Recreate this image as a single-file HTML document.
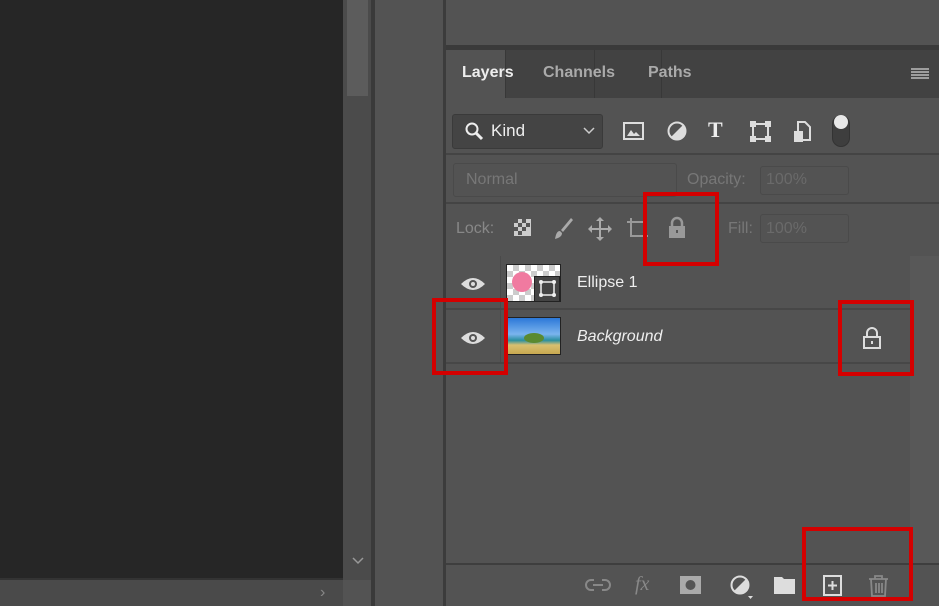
<!DOCTYPE html><html><head><style>
*{margin:0;padding:0;box-sizing:border-box}
body{width:939px;height:606px;overflow:hidden;background:#535353;position:relative;font-family:"Liberation Sans",sans-serif;color:#ddd}
.a{position:absolute}
.rb{position:absolute;border:4px solid #d40000}
svg{position:absolute}
</style></head><body>
<div class="a" style="left:0;top:0;width:343px;height:578px;background:#262626"></div>
<div class="a" style="left:0;top:578px;width:343px;height:2px;background:#333"></div>
<div class="a" style="left:0;top:580px;width:343px;height:26px;background:#4a4a4a"></div>
<div class="a" style="left:320px;top:584px;color:#888;font-size:16px">›</div>
<div class="a" style="left:343px;top:0;width:28px;height:580px;background:#4b4b4b"></div>
<div class="a" style="left:347px;top:0;width:21px;height:96px;background:#5c5c5c"></div>
<svg style="left:350px;top:555px" width="16" height="12"><path d="M3 3l5 5 5-5" stroke="#999" fill="none" stroke-width="1.5"/></svg>
<div class="a" style="left:371px;top:0;width:4px;height:606px;background:#3a3a3a"></div>
<div class="a" style="left:375px;top:0;width:68px;height:606px;background:#535353"></div>
<div class="a" style="left:443px;top:0;width:3px;height:606px;background:#3c3c3c"></div>
<div class="a" style="left:446px;top:0;width:493px;height:45px;background:#535353"></div>
<div class="a" style="left:446px;top:45px;width:493px;height:5px;background:#3a3a3a"></div>
<div class="a" style="left:446px;top:50px;width:493px;height:48px;background:#424242"></div>
<div class="a" style="left:446px;top:50px;width:59px;height:49px;background:#535353"></div>
<div class="a" style="left:505px;top:50px;width:1px;height:48px;background:#383838"></div>
<div class="a" style="left:594px;top:50px;width:1px;height:48px;background:#383838"></div>
<div class="a" style="left:661px;top:50px;width:1px;height:48px;background:#383838"></div>
<div class="a" style="left:462px;top:64px;font-size:16px;font-weight:bold;color:#eee">Layers</div>
<div class="a" style="left:543px;top:64px;font-size:16px;font-weight:bold;color:#aaa">Channels</div>
<div class="a" style="left:648px;top:64px;font-size:16px;font-weight:bold;color:#aaa">Paths</div>
<svg style="left:910px;top:67px" width="20" height="14"><path d="M1 2h18M1 5h18M1 8h18M1 11h18" stroke="#bbb" stroke-width="1.5"/></svg>
<!-- filter row -->
<div class="a" style="left:452px;top:114px;width:151px;height:35px;background:#444;border:1px solid #3a3a3a;border-radius:3px"></div>
<svg style="left:464px;top:121px" width="22" height="22"><circle cx="8" cy="8" r="5.5" stroke="#eee" stroke-width="2" fill="none"/><path d="M12 12l6 6" stroke="#eee" stroke-width="3"/></svg>
<div class="a" style="left:491px;top:121px;font-size:17px;color:#eee">Kind</div>
<svg style="left:582px;top:126px" width="14" height="10"><path d="M2 2l5 5 5-5" stroke="#ccc" fill="none" stroke-width="1.5"/></svg>
<svg style="left:622px;top:120px" width="24" height="22"><rect x="2" y="3" width="19" height="16" stroke="#ddd" stroke-width="2" fill="none"/><path d="M5 16l4-6 3 4 2-2 4 4z" fill="#ddd"/></svg>
<svg style="left:665px;top:119px" width="24" height="24"><circle cx="12" cy="12" r="8.5" stroke="#ddd" stroke-width="2" fill="none"/><path d="M18 6L6 18A8.5 8.5 0 0 0 18 6z" fill="#ddd"/></svg>
<div class="a" style="left:708px;top:117px;font-size:22px;font-weight:bold;font-family:'Liberation Serif',serif;color:#eee">T</div>
<svg style="left:749px;top:120px" width="24" height="24"><rect x="4" y="4" width="15" height="15" stroke="#ddd" stroke-width="2" fill="none"/><rect x="1" y="1" width="6" height="6" fill="#ddd"/><rect x="16" y="1" width="6" height="6" fill="#ddd"/><rect x="1" y="16" width="6" height="6" fill="#ddd"/><rect x="16" y="16" width="6" height="6" fill="#ddd"/></svg>
<svg style="left:792px;top:119px" width="22" height="26"><path d="M6 3h7l5 5v13H6z" stroke="#ddd" stroke-width="2" fill="none"/><rect x="2" y="12" width="9" height="11" fill="#ddd"/></svg>
<div class="a" style="left:832px;top:115px;width:18px;height:32px;border-radius:9px;background:#3e3e3e;border:1px solid #333"></div>
<div class="a" style="left:834px;top:115px;width:14px;height:14px;border-radius:7px;background:#e8e8e8"></div>
<div class="a" style="left:446px;top:153px;width:493px;height:2px;background:#444"></div>
<!-- blend row -->
<div class="a" style="left:453px;top:163px;width:224px;height:34px;border:1px solid #4a4a4a;border-radius:3px"></div>
<div class="a" style="left:466px;top:171px;font-size:16px;color:#777">Normal</div>
<div class="a" style="left:687px;top:171px;font-size:16px;color:#777">Opacity:</div>
<div class="a" style="left:760px;top:166px;width:89px;height:29px;border:1px solid #4a4a4a;border-radius:3px"></div>
<div class="a" style="left:766px;top:171px;font-size:16px;color:#6a6a6a">100%</div>
<div class="a" style="left:446px;top:202px;width:493px;height:2px;background:#444"></div>
<!-- lock row -->
<div class="a" style="left:456px;top:220px;font-size:16px;color:#888">Lock:</div>
<svg style="left:512px;top:217px" width="22" height="22"><rect x="2" y="2" width="17" height="17" fill="#ccc"/><path d="M2 2h4v4H2zM10 2h4v4h-4zM6 6h4v4H6zM14 6h4v4h-4zM2 10h4v4H2zM10 10h4v4h-4zM6 14h4v4H6z" fill="#555"/></svg>
<svg style="left:549px;top:216px" width="26" height="26"><path d="M22 2L12 14l2 2L24 4z" fill="#aaa"/><path d="M11 15c-3 0-4 3-5 8 3-1 7-2 7-6z" fill="#aaa"/></svg>
<svg style="left:587px;top:216px" width="26" height="26"><path d="M13 2v22M2 13h22" stroke="#aaa" stroke-width="2"/><path d="M13 1l-4 4h8zM13 25l-4-4h8zM1 13l4-4v8zM25 13l-4-4v8z" fill="#aaa"/></svg>
<svg style="left:626px;top:217px" width="24" height="26"><path d="M5 1v18h17M1 5h18v18" stroke="#999" stroke-width="2" fill="none"/></svg>
<svg style="left:666px;top:216px" width="22" height="24"><path d="M6 10V7a5 5 0 0 1 10 0v3" stroke="#999" stroke-width="2.5" fill="none"/><rect x="3" y="10" width="16" height="12" fill="#999"/><rect x="10" y="14" width="2" height="3" fill="#555"/></svg>
<div class="a" style="left:728px;top:220px;font-size:16px;color:#777">Fill:</div>
<div class="a" style="left:760px;top:214px;width:89px;height:29px;border:1px solid #4a4a4a;border-radius:3px"></div>
<div class="a" style="left:766px;top:220px;font-size:16px;color:#6a6a6a">100%</div>
<!-- layers list -->
<div class="a" style="left:910px;top:256px;width:29px;height:309px;background:#585858"></div>
<div class="a" style="left:446px;top:256px;width:464px;height:52px;background:#535353"></div>
<div class="a" style="left:500px;top:256px;width:1px;height:108px;background:#4a4a4a"></div>
<div class="a" style="left:446px;top:308px;width:464px;height:2px;background:#474747"></div>
<div class="a" style="left:446px;top:362px;width:464px;height:2px;background:#474747"></div>
<svg style="left:459px;top:275px" width="28" height="18"><path d="M2 9Q14 -3 26 9Q14 21 2 9z" fill="#ddd"/><circle cx="14" cy="9" r="4" fill="#555"/><circle cx="14" cy="9" r="2" fill="#ddd"/></svg>
<svg style="left:459px;top:329px" width="28" height="18"><path d="M2 9Q14 -3 26 9Q14 21 2 9z" fill="#ddd"/><circle cx="14" cy="9" r="4" fill="#555"/><circle cx="14" cy="9" r="2" fill="#ddd"/></svg>
<div class="a" style="left:506px;top:264px;width:55px;height:38px;border:1px solid #222;background:repeating-conic-gradient(#ccc 0 25%,#fff 0 50%) 0 0/12px 12px"></div>
<div class="a" style="left:512px;top:272px;width:20px;height:20px;border-radius:50%;background:#f07aa0"></div>
<div class="a" style="left:534px;top:276px;width:26px;height:26px;background:#444;border:1px solid #222"></div>
<svg style="left:538px;top:279px" width="20" height="20"><rect x="3" y="3" width="13" height="13" stroke="#eee" stroke-width="1.5" fill="none"/><circle cx="3" cy="3" r="2" fill="#eee"/><circle cx="16" cy="3" r="2" fill="#eee"/><circle cx="3" cy="16" r="2" fill="#eee"/><circle cx="16" cy="16" r="2" fill="#eee"/></svg>
<div class="a" style="left:577px;top:274px;font-size:16px;color:#eee">Ellipse 1</div>
<div class="a" style="left:507px;top:317px;width:54px;height:38px;border:1px solid #222;background:linear-gradient(#2c78d8 0,#7ab4ee 45%,#2a8fa0 62%,#d8c070 75%,#c8a850 100%)"></div>
<div class="a" style="left:524px;top:333px;width:20px;height:10px;border-radius:50%;background:#5a8a30"></div>
<div class="a" style="left:577px;top:328px;font-size:16px;font-style:italic;color:#eee">Background</div>
<svg style="left:861px;top:326px" width="22" height="24"><path d="M6 11V7a5 5 0 0 1 10 0v4" stroke="#ddd" stroke-width="2" fill="none"/><rect x="3" y="11" width="16" height="11" stroke="#ddd" stroke-width="2" fill="none"/><rect x="10" y="15" width="2" height="3" fill="#ddd"/></svg>
<!-- bottom bar -->
<div class="a" style="left:446px;top:563px;width:493px;height:2px;background:#3e3e3e"></div>
<svg style="left:585px;top:576px" width="26" height="18"><path d="M9 4H6a5 5 0 0 0 0 10h3M17 4h3a5 5 0 0 1 0 10h-3M8 9h10" stroke="#888" stroke-width="2" fill="none"/></svg>
<div class="a" style="left:635px;top:573px;font-size:20px;font-style:italic;font-family:'Liberation Serif',serif;color:#888">fx</div>
<svg style="left:679px;top:575px" width="24" height="20"><rect x="1" y="1" width="21" height="18" fill="#aaa"/><circle cx="11.5" cy="10" r="5" fill="#555"/></svg>
<svg style="left:728px;top:574px" width="26" height="26"><circle cx="12" cy="11" r="8.5" stroke="#ddd" stroke-width="2" fill="none"/><path d="M18 5L6 17A8.5 8.5 0 0 0 18 5z" fill="#ddd"/><path d="M20 22h5l-2.5 3z" fill="#ddd"/></svg>
<svg style="left:773px;top:575px" width="24" height="20"><path d="M1 2h8l2 2h11v15H1z" fill="#ddd"/></svg>
<svg style="left:822px;top:574px" width="22" height="24"><rect x="2" y="2" width="17" height="19" stroke="#ddd" stroke-width="2" fill="none"/><path d="M10.5 7v9M6 11.5h9" stroke="#ddd" stroke-width="2"/></svg>
<svg style="left:867px;top:574px" width="24" height="24"><path d="M2 5h19M8 5V2h7v3M4 5l1 17h13l1-17M9 9v10M12 9v10M15 9v10" stroke="#888" stroke-width="1.8" fill="none"/></svg>
<!-- red boxes -->
<div class="rb" style="left:643px;top:192px;width:76px;height:74px"></div>
<div class="rb" style="left:432px;top:298px;width:76px;height:77px"></div>
<div class="rb" style="left:838px;top:300px;width:76px;height:76px"></div>
<div class="rb" style="left:802px;top:527px;width:111px;height:74px"></div>
</body></html>
